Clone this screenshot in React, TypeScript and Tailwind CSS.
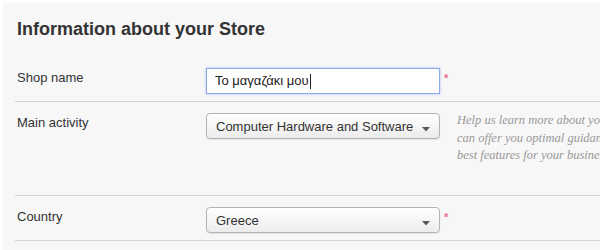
import React from "react";

function Asterisk() {
  return (
    <span className="ml-[4px] mt-[5px] self-start text-[11px] leading-[11px] font-bold text-[#ee6a8c]">*</span>
  );
}

function Arrow() {
  return (
    <svg width="8" height="5" viewBox="0 0 8 5" className="absolute right-[9px] top-[13px]">
      <path d="M0 0 L8 0 L4 4.5 Z" fill="#5a5a5a" />
    </svg>
  );
}

function Select({ value }: { value: string }) {
  return (
    <div className="relative w-[234px] h-[26px] rounded-[4px] border border-[#b3b3b3] bg-gradient-to-b from-[#ffffff] to-[#ececec] shadow-[0_1px_1px_rgba(0,0,0,0.08)] flex items-center pl-[9px] pt-[1px] text-[13px] text-[#333]">
      <span className="leading-[16px]">{value}</span>
      <Arrow />
    </div>
  );
}

export default function App() {
  return (
    <div className="w-[600px] h-[250px] bg-white pt-[3px] pl-[3px] overflow-hidden font-['Liberation_Sans',Arial,sans-serif]">
      <div className="h-[247px] bg-[#f7f7f7] overflow-hidden">
        <div className="h-[55px] pt-[14px] pl-[14px]">
          <h1 className="text-[18px] leading-[24px] font-bold text-[#333]">Information about your Store</h1>
        </div>
        <div className="ml-[12px] w-[700px]">
          {/* Row 1 */}
          <div className="flex items-start pt-[10px] pb-[7px] border-b border-[#d2d2d2]">
            <div className="w-[191px] pl-[2px] pt-[2px] text-[13px] leading-[16px] text-[#333]">Shop name</div>
            <div className="relative w-[234px] h-[26px] border border-[#8eabf0] bg-white shadow-[0_0_2px_rgba(120,150,235,0.7)] flex items-center pl-[8px] text-[13px] text-[#222]">
              <span className="leading-[16px]">Το μαγαζάκι μου</span>
              <span className="ml-[1px] w-[1px] h-[15px] bg-[#222]" />
            </div>
            <Asterisk />
          </div>
          {/* Row 2 */}
          <div className="flex items-start h-[94px] pt-[11px] border-b border-[#d2d2d2]">
            <div className="w-[191px] pl-[2px] pt-[2px] text-[13px] leading-[16px] text-[#333]">Main activity</div>
            <Select value="Computer Hardware and Software" />
            <div className="ml-[17px] -mt-[1px] text-[12.5px] leading-[17.6px] italic text-[#999] font-['Liberation_Serif',Georgia,serif] whitespace-nowrap">
              <div>Help us learn more about your store so we</div>
              <div>can offer you optimal guidance and suggest the</div>
              <div>best features for your business!</div>
            </div>
          </div>
          {/* Row 3 */}
          <div className="flex items-start pt-[11px] pb-[7px] border-b border-[#d2d2d2]">
            <div className="w-[191px] pl-[2px] pt-[2px] text-[13px] leading-[16px] text-[#333]">Country</div>
            <Select value="Greece" />
            <Asterisk />
          </div>
        </div>
      </div>
    </div>
  );
}
